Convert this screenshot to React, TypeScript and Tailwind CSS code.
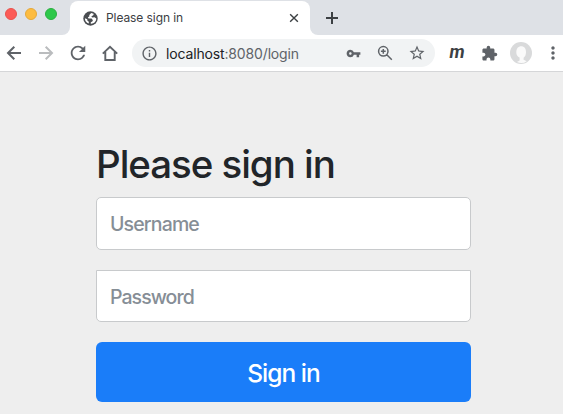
import React from "react";
import { MdExtension, MdMoreVert, MdOutlineInfo, MdRefresh, MdStarBorder, MdVpnKey } from "react-icons/md";

function Slot({ children }: { children: React.ReactNode }) {
  return <span className="flex w-8 shrink-0 items-center justify-center">{children}</span>;
}

function Stroke({ d, size, width, className }: { d: string; size: number; width: number; className?: string }) {
  return (
    <svg width={size} height={size} viewBox="0 0 20 20" fill="none" stroke="currentColor" strokeWidth={width} className={className}>
      <path d={d} />
    </svg>
  );
}

function TabStrip() {
  return (
    <div className="flex h-[35px] items-start bg-[#dee1e6]">
      <div className="flex w-[62px] gap-2 pl-[5px] pt-2">
        <span className="size-3 rounded-full border border-[#e9524d] bg-[#fc5b57]" />
        <span className="size-3 rounded-full border border-[#e5a93a] bg-[#fdbc40]" />
        <span className="size-3 rounded-full border border-[#2bb041] bg-[#2dc84a]" />
      </div>
      <div className="h-full w-2 bg-white">
        <div className="h-full rounded-br-lg bg-[#dee1e6]" />
      </div>
      <div className="mt-px flex h-[34px] w-[240px] items-center rounded-t-lg bg-white pl-[13px]">
        <svg width="15" height="15" viewBox="0 0 15 15">
          <circle cx="7.500" cy="7.500" r="7.200" fill="#4a4d51" />
          <path
            d="M8.200 1.900 6.300 3.900v1.600L4.900 6.300l.6 1.300h3.100l1.300 1.600-.6 1.300-1.500.7v1.500c3.100.2 5.500-2.300 5.500-5.200l-1.700-1.200-2.400.2-.9-1.100 2.200-1.400.1-1.300zM1.900 7.200c-.2 2.500 1.400 4.700 3.900 5.400v-1.800L4.300 9.500V8.300z"
            fill="#fff"
          />
        </svg>
        <span className="ml-2 grow text-[12px] tracking-[-0.08px] text-[#3c4043]">Please sign in</span>
        <Stroke d="M4.500 4.500l11 11M15.500 4.500l-11 11" size={14} width={2} className="mr-[9px] text-[#3c4043]" />
      </div>
      <div className="h-full grow bg-white">
        <div className="flex h-full items-center rounded-bl-lg bg-[#dee1e6] pl-[12px]">
          <Stroke d="M10 4v12M4 10h12" size={20} width={2} className="text-[#3c4043]" />
        </div>
      </div>
    </div>
  );
}

function Toolbar() {
  return (
    <div className="flex h-[37px] items-center overflow-hidden border-b border-[#d5d6d8] bg-white pl-1 text-[#5f6368]">
      <div className="flex gap-3">
        <Stroke d="M17 10H4.500M10.300 3.700L4 10l6.300 6.300" size={20} width={2} />
        <Stroke d="M3 10h12.500M9.700 3.700L16 10l-6.300 6.300" size={20} width={2} className="text-[#babcbe]" />
        <MdRefresh size={20} viewBox="1 1 22 22" />
        <Stroke d="M2.800 10.600L10 3.700l7.200 6.900M5.300 9v8h9.400V9" size={20} width={1.9} />
      </div>
      <div className="ml-3 flex h-7 w-[303px] shrink-0 items-center rounded-full bg-[#f1f3f4] pl-[9px] pr-0.5">
        <MdOutlineInfo size={17} />
        <span className="ml-2 grow text-[14px] tracking-[-0.15px] text-[#5f6368]">
          <span className="text-[#202124]">localhost</span>:8080/login
        </span>
        <Slot><MdVpnKey size={15} /></Slot>
        <Slot>
          <Stroke d="M13 8.300a4.700 4.700 0 1 1-9.400 0a4.700 4.700 0 0 1 9.400 0zM11.800 11.800l5 5M8.300 5.900v4.800M5.900 8.300h4.800" size={20} width={1.5} />
        </Slot>
        <Slot><MdStarBorder size={18} /></Slot>
      </div>
      <div className="ml-1.5 flex items-center">
        <Slot>
          <span className="relative -top-px font-['Roboto',sans-serif] text-[18px] font-bold italic leading-5 text-[#3c4043]">m</span>
        </Slot>
        <Slot><MdExtension size={17} /></Slot>
        <Slot>
          <svg width="22" height="22" viewBox="0 0 22 22">
            <circle cx="11" cy="11" r="11" fill="#d9dadb" />
            <path d="M6.300 10.500c0-4 2-6.200 4.900-6.200s4.800 2.100 4.800 5.700c0 3-1 4.800-2.400 5.700v2l3.100 1.500A9.500 9.500 0 0 1 7 20l2.600-1.500v-3C7.500 14.500 6.300 13 6.300 10.500z" fill="#fafafa" />
          </svg>
        </Slot>
        <Slot><MdMoreVert size={20} /></Slot>
      </div>
    </div>
  );
}

export default function App() {
  return (
    <div className="flex h-[414px] w-[563px] flex-col overflow-hidden bg-[#eeeeee] font-['Inter','Liberation_Sans',sans-serif]">
      <TabStrip />
      <Toolbar />
      <form className="ml-24 mt-[68px] flex w-[375px] flex-col" onSubmit={(e) => e.preventDefault()}>
        <h2 className="h-[57px] whitespace-nowrap text-[38.500px] font-medium leading-[49px] tracking-[-1.050px] text-[#212529]">
          Please sign in
        </h2>
        <input
          type="text"
          placeholder="Username"
          className="h-[53px] rounded-[5px] border border-[#c8cacc] bg-white px-[13px] text-[19.500px] font-[450] tracking-[-0.85px] placeholder:text-[#868e96]"
        />
        <input
          type="password"
          placeholder="Password"
          className="mt-5 h-[52px] rounded-b-[5px] border border-[#c8cacc] bg-white px-[13px] pt-0.5 text-[19.500px] font-[450] tracking-[-0.95px] placeholder:text-[#868e96]"
        />
        <button type="submit" className="mt-5 h-[60px] rounded-md bg-[#1a7df9] pt-0.5 text-[24.500px] font-[450] tracking-[-0.95px] text-white">
          Sign in
        </button>
      </form>
    </div>
  );
}
